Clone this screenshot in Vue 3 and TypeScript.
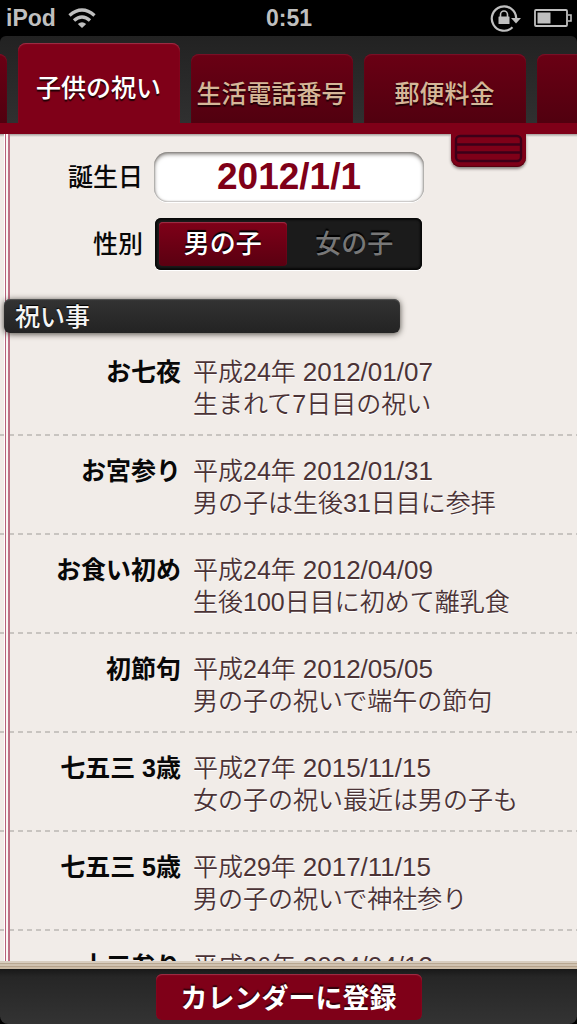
<script setup lang="ts">
import { ref } from 'vue'

interface Tab {
  id: string
  label: string
}

interface Celebration {
  name: string
  era: string
  date: string
  note: string
}

const tabs: Tab[] = [
  { id: 'previous', label: '' },
  { id: 'child', label: '子供の祝い' },
  { id: 'phone', label: '生活電話番号' },
  { id: 'postage', label: '郵便料金' },
  { id: 'next', label: '' },
]

const celebrations: Celebration[] = [
  { name: 'お七夜', era: '平成24年', date: '2012/01/07', note: '生まれて7日目の祝い' },
  { name: 'お宮参り', era: '平成24年', date: '2012/01/31', note: '男の子は生後31日目に参拝' },
  { name: 'お食い初め', era: '平成24年', date: '2012/04/09', note: '生後100日目に初めて離乳食' },
  { name: '初節句', era: '平成24年', date: '2012/05/05', note: '男の子の祝いで端午の節句' },
  { name: '七五三 3歳', era: '平成27年', date: '2015/11/15', note: '女の子の祝い最近は男の子も' },
  { name: '七五三 5歳', era: '平成29年', date: '2017/11/15', note: '男の子の祝いで神社参り' },
  { name: '十三参り', era: '平成36年', date: '2024/04/13', note: '' },
]

const activeTab = ref('child')
const birthday = ref('2012/1/1')
const gender = ref('boy')
</script>

<template>
  <div class="app">
    <header class="status">
      <div class="status-left">
        <span>iPod</span>
        <svg class="wifi" viewBox="0 0 28 20" aria-hidden="true">
          <path d="M1.500 7.500Q14-3.500 26.500 7.500M6 12.500Q14 5.500 22 12.500" fill="none" stroke="currentColor" stroke-width="3.400" />
          <path d="M9.800 16Q14 12.500 18.200 16L14 20Z" fill="currentColor" />
        </svg>
      </div>
      <span>0:51</span>
      <div class="status-right">
        <svg class="lock" viewBox="0 0 32 28" aria-hidden="true">
          <path d="M22.500 23.300A12.200 12.200 0 1 1 26.200 14" fill="none" stroke="currentColor" stroke-width="2.200" />
          <path d="M21 14H31L26 19.500Z" fill="currentColor" />
          <rect x="8.500" y="12.500" width="11" height="7.500" rx="0.500" fill="currentColor" />
          <path d="M10.500 13V10.500a3.500 3.500 0 0 1 7 0V13" fill="none" stroke="currentColor" stroke-width="1.600" />
        </svg>
        <svg class="battery" viewBox="0 0 38 18" aria-hidden="true">
          <rect x="1" y="1" width="32" height="16" rx="1" fill="none" stroke="currentColor" stroke-width="1.800" />
          <rect x="3.500" y="3.500" width="13" height="11" fill="currentColor" />
          <path d="M34 6H37V12H34" fill="none" stroke="currentColor" stroke-width="1.600" />
        </svg>
      </div>
    </header>

    <nav class="tabs" aria-label="カテゴリー">
      <button
        v-for="tab in tabs"
        :key="tab.id"
        type="button"
        class="tab"
        :class="{ active: tab.id === activeTab }"
        :aria-current="tab.id === activeTab"
        @click="activeTab = tab.id"
      >{{ tab.label }}</button>
    </nav>

    <main class="page">
      <button type="button" class="handle">
        <svg viewBox="0 0 75 33" aria-hidden="true">
          <rect x="5" y="2" width="65" height="25" rx="4" />
          <path d="M5 10.500H70M5 18.500H70" />
        </svg>
      </button>

      <form class="form" @submit.prevent>
        <div class="field">
          <label class="caption" for="birthday">誕生日</label>
          <input id="birthday" v-model="birthday" class="birthday" type="text">
        </div>
        <div class="field" role="radiogroup" aria-labelledby="gender-caption">
          <span id="gender-caption" class="caption">性別</span>
          <div class="switch">
            <label class="option" :class="{ chosen: gender === 'boy' }">
              <input v-model="gender" type="radio" name="gender" value="boy">男の子
            </label>
            <label class="option" :class="{ chosen: gender === 'girl' }">
              <input v-model="gender" type="radio" name="gender" value="girl">女の子
            </label>
          </div>
        </div>
      </form>

      <h2 class="heading">祝い事</h2>

      <ul class="list">
        <li v-for="item in celebrations" :key="item.name" class="row">
          <strong class="name">{{ item.name }}</strong>
          <div class="detail">
            <div>{{ item.era }} <time>{{ item.date }}</time></div>
            <div>{{ item.note }}</div>
          </div>
        </li>
      </ul>
    </main>

    <footer class="footer">
      <button type="button" class="register">カレンダーに登録</button>
    </footer>
  </div>
</template>

<style>
body {
  margin: 0;
  background: #000;
}
</style>

<style scoped>
.app {
  display: flex;
  flex-direction: column;
  height: 100vh;
  overflow: hidden;
  background: #000;
  font-family: "Liberation Sans", "Noto Sans CJK JP", sans-serif;
  font-size: 25px;
}

button,
input {
  font-family: inherit;
  margin: 0;
  padding: 0;
  border: 0;
}

.status {
  display: grid;
  grid-template-columns: 1fr auto 1fr;
  align-items: center;
  flex: none;
  height: 36px;
  padding: 0 5px 0 6px;
  box-sizing: border-box;
  color: #bfbfbf;
  font-size: 23px;
  font-weight: bold;
  line-height: 34px;
}

.status-left,
.status-right {
  display: flex;
  align-items: center;
  gap: 12px;
}

.status-right {
  justify-content: flex-end;
}

.wifi {
  width: 28px;
  height: 20px;
}

.lock {
  width: 32px;
  height: 28px;
}

.battery {
  width: 38px;
  height: 18px;
}

.tabs {
  display: flex;
  align-items: flex-end;
  justify-content: center;
  gap: 11px;
  flex: none;
  height: 98px;
  box-sizing: border-box;
  border-bottom: 11px solid #7f0018;
  border-radius: 6px 6px 0 0;
  background: linear-gradient(#222, #303030);
  overflow: hidden;
  padding-right: 34px;
}

.tab {
  flex: none;
  width: 162px;
  height: 69px;
  padding-top: 6px;
  border-radius: 8px 8px 0 0;
  background: linear-gradient(#6a0014, #51000f);
  box-shadow: inset 0 1px 1px #7c1228;
  color: #d5b798;
  font-size: 25px;
  font-weight: 500;
  text-shadow: 0 2px 1px #200006;
  white-space: nowrap;
}

.tab.active {
  height: 80px;
  background: #7f0018;
  box-shadow: inset 0 1px 1px #a03048;
  color: #fff;
}

.page {
  position: relative;
  flex: 1;
  min-height: 0;
  overflow: hidden;
  background: linear-gradient(#a5a09c, #f1ece8 3px);
}

.page::before {
  content: "";
  position: absolute;
  top: 0;
  bottom: 0;
  left: 4px;
  width: 6px;
  background: linear-gradient(90deg, #fff 1px, #b8607a 1px, #b8607a 2px, #faf7f5 2px, #faf7f5 4px, #bd7085 4px);
}

.handle {
  position: absolute;
  top: 0;
  right: 51px;
  width: 75px;
  height: 33px;
  border-radius: 0 0 9px 9px;
  background: #7f0018;
  box-shadow: inset 0 -1px 1px #54000f, 0 2px 3px #8a8480;
}

.handle svg {
  display: block;
  width: 75px;
  height: 33px;
  fill: none;
  stroke: #3c0018;
  stroke-width: 2.400;
}

.form {
  display: flex;
  flex-direction: column;
  gap: 16px;
  padding-top: 18px;
}

.field {
  display: grid;
  grid-template-columns: 143px 270px;
  gap: 11px;
  align-items: center;
}

.caption {
  text-align: right;
  font-weight: 500;
  line-height: 36px;
  color: #080808;
}

.birthday {
  width: 270px;
  height: 50px;
  box-sizing: border-box;
  border-radius: 14px;
  background: #fff;
  box-shadow: inset 0 2px 4px #77736f, inset 0 0 2px #77736f, 0 1px 0 #fff;
  color: #7f0018;
  font-size: 37px;
  font-weight: bold;
  text-align: center;
}

.switch {
  display: flex;
  gap: 4px;
  height: 52px;
  margin: 0 2px 0 1px;
  box-sizing: border-box;
  padding: 4px;
  border-radius: 6px;
  background: #1b1b1b;
  box-shadow: inset 0 0 2px 2px #080808, 0 1px 0 #fff;
}

.option {
  flex: 1;
  border-radius: 4px;
  color: #777;
  font-size: 26px;
  font-weight: 500;
  line-height: 44px;
  text-align: center;
  text-shadow: 0 -2px 1px #000;
}

.option input {
  appearance: none;
  position: absolute;
}

.option.chosen {
  background: linear-gradient(#7f0018, #5a0011);
  box-shadow: inset 0 1px 1px #a03048;
  color: #fff;
}

.heading {
  position: relative;
  width: 396px;
  height: 34px;
  margin: 29px 0 4px 4px;
  padding-left: 11px;
  box-sizing: border-box;
  border-radius: 6px;
  background: linear-gradient(#333, #232323);
  box-shadow: inset 0 1px 1px #555, 0 1px 6px #4a463f;
  color: #f4f4f4;
  font-size: 25px;
  font-weight: 500;
  line-height: 36px;
  text-shadow: 0 -1px 1px #000;
}

.list {
  margin: 0;
  padding: 0;
  list-style: none;
}

.row {
  display: grid;
  grid-template-columns: 181px 1fr;
  gap: 12px;
  height: 99px;
  padding-top: 19px;
  box-sizing: border-box;
  background: repeating-linear-gradient(90deg, #c8c4c0 0, #c8c4c0 5px, transparent 5px, transparent 9px) 0 100% / 100% 2px no-repeat;
  line-height: 32px;
}

.name {
  text-align: right;
  font-weight: bold;
  color: #080808;
}

.detail {
  color: #4b3336;
  font-weight: 350;
  text-shadow: 0 1px 0 #fff;
  white-space: nowrap;
}

.detail time {
  font-size: 26px;
}

.footer {
  display: flex;
  justify-content: center;
  flex: none;
  height: 63px;
  box-sizing: border-box;
  padding-top: 13px;
  border-radius: 0 0 8px 8px;
  background:
    linear-gradient(#d8cdbf 2px, #b8a791 2px, #b8a791 3px, #d0c2b0 3px, #d0c2b0 5px, #b5a18a 5px, #b5a18a 6px, #cbbba6 6px) 0 0 / 100% 8px no-repeat,
    linear-gradient(#181818 8px, #262626 16px, #333);
}

.register {
  width: 266px;
  height: 46px;
  padding-bottom: 2px;
  border-radius: 6px;
  background: #7f0018;
  box-shadow: inset 0 1px 1px #a03048;
  color: #fff;
  font-size: 27px;
  font-weight: bold;
  text-shadow: 0 -2px 1px #30000a;
}
</style>
